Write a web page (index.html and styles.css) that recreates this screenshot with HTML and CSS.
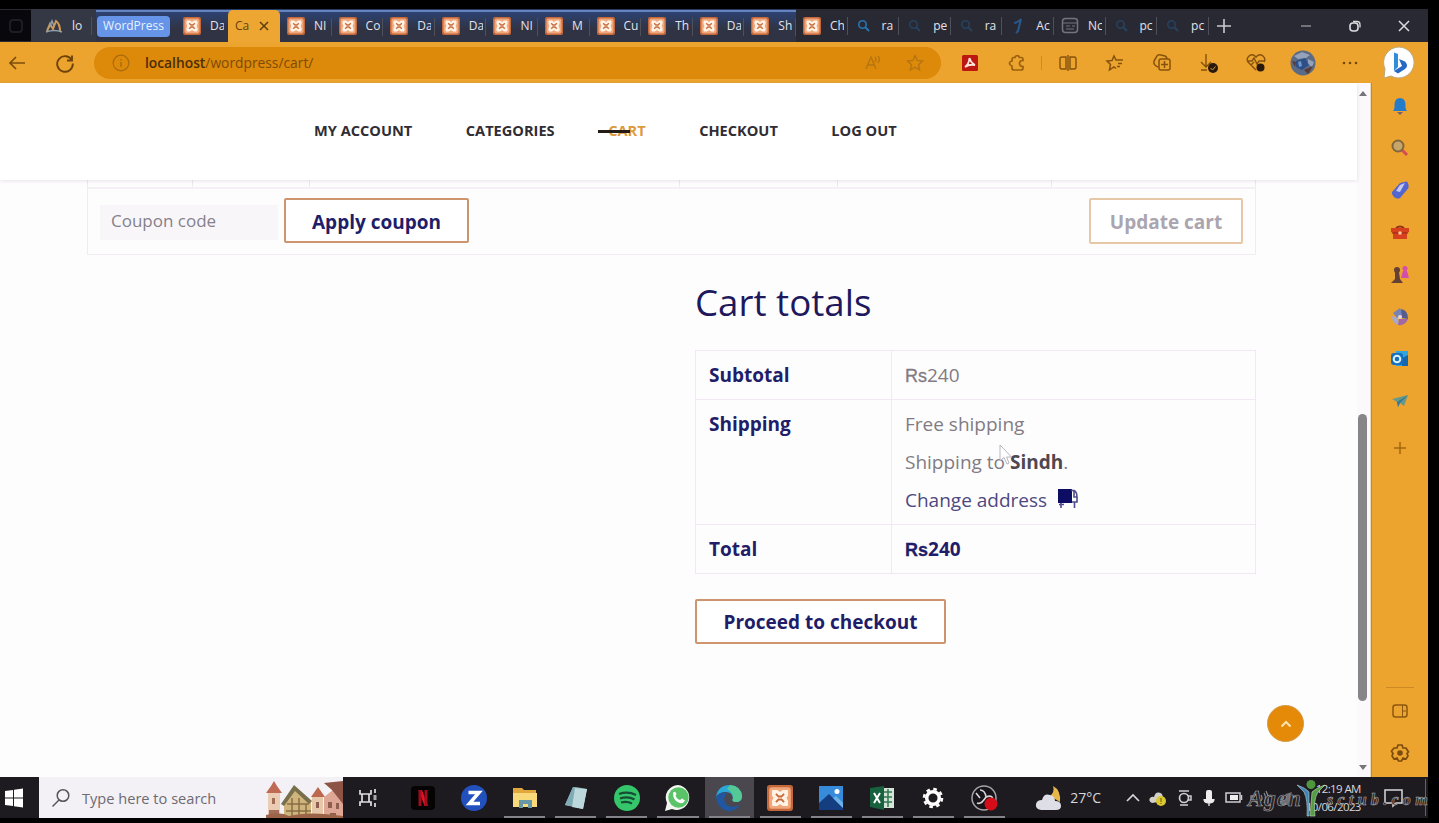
FILE: index.html
```html
<!DOCTYPE html>
<html lang="en">
<head>
    <meta charset="UTF-8">
    <meta name="viewport" content="width=device-width, initial-scale=1.0">
    <title>Cart</title>
    <link rel="stylesheet" href="styles.css">
</head>
<body>
    <!-- shared icons -->
    <svg class="sprite" width="0" height="0">
        <symbol id="xampp" viewBox="0 0 18 18">
            <rect width="18" height="18" rx="2" fill="#c4683c"/>
            <rect x="1.5" y="1.5" width="15" height="15" rx="2" fill="#f0a77c"/>
            <path d="M4 4H7L9 5.500L11 4H14V7L13 9L14 11V14H11L9 12.500L7 14H4V11L5 9L4 7Z" fill="#fff3e6" stroke="#fff3e6" stroke-linejoin="round"/>
            <path d="M6.200 6.200L8 8H10L11.800 6.200M6.200 11.800L8 10H10L11.800 11.800" fill="none" stroke="#c9693a" stroke-width="1.300"/>
        </symbol>
        <symbol id="lens" viewBox="0 0 18 18">
            <path d="M10.500 10.500L14 14" stroke="currentColor" stroke-width="2" fill="none"/>
            <circle cx="7.500" cy="7.500" r="3.700" stroke="currentColor" stroke-width="1.600" fill="none"/>
        </symbol>
    </svg>

    <div class="screen">
        <div class="tab-strip">
            <div class="workspace"><svg width="14" height="14" viewBox="0 0 14 14"><rect x="1" y="1" width="12" height="12" rx="3" fill="none" stroke="#1d1e25" stroke-width="2"/></svg></div>
            <div class="tab first">
                <svg class="favicon" viewBox="0 0 18 18"><path d="M2 14L5 7L8 12L11 4Q15 7 15 14" fill="none" stroke="#d39a55" stroke-width="2"/><path d="M1 15Q9 12 17 15M4 11L7 4L9 9" fill="none" stroke="#8fa3ae" stroke-width="1.500"/></svg>
                <span>lo</span>
            </div>
            <div class="tab-group">
                <div class="group-name">WordPress</div>
                <div class="tab before-active"><svg class="favicon"><use href="#xampp"/></svg><span>Da</span></div>
                <div class="tab active"><span>Ca</span><svg width="12" height="12" viewBox="0 0 12 12"><path d="M2 2L10 10M10 2L2 10" stroke="#5b3d0c" stroke-width="1.500"/></svg></div>
                <div class="tab"><svg class="favicon"><use href="#xampp"/></svg><span>NI</span></div>
                <div class="tab"><svg class="favicon"><use href="#xampp"/></svg><span>Co</span></div>
                <div class="tab"><svg class="favicon"><use href="#xampp"/></svg><span>Da</span></div>
                <div class="tab"><svg class="favicon"><use href="#xampp"/></svg><span>Da</span></div>
                <div class="tab"><svg class="favicon"><use href="#xampp"/></svg><span>NI</span></div>
                <div class="tab"><svg class="favicon"><use href="#xampp"/></svg><span>M</span></div>
                <div class="tab"><svg class="favicon"><use href="#xampp"/></svg><span>Cu</span></div>
                <div class="tab"><svg class="favicon"><use href="#xampp"/></svg><span>Th</span></div>
                <div class="tab"><svg class="favicon"><use href="#xampp"/></svg><span>Da</span></div>
                <div class="tab"><svg class="favicon"><use href="#xampp"/></svg><span>Sh</span></div>
            </div>
            <div class="tab"><svg class="favicon"><use href="#xampp"/></svg><span>Ch</span></div>
            <div class="tab"><svg class="favicon blue bright"><use href="#lens"/></svg><span>ra</span></div>
            <div class="tab"><svg class="favicon blue"><use href="#lens"/></svg><span>pe</span></div>
            <div class="tab"><svg class="favicon blue"><use href="#lens"/></svg><span>ra</span></div>
            <div class="tab"><svg class="favicon" viewBox="0 0 18 18"><path d="M5 6Q10 5 12 2L9 14L7 16" fill="none" stroke="#28598e" stroke-width="2"/></svg><span>Ac</span></div>
            <div class="tab"><svg class="favicon" viewBox="0 0 18 18"><rect x="1.500" y="1.500" width="15" height="14" rx="3" fill="none" stroke="#73747d" stroke-width="1.500"/><path d="M2 6h14M5 9h4M11 9h3M5 12h8" stroke="#73747d"/></svg><span>Nc</span></div>
            <div class="tab"><svg class="favicon blue"><use href="#lens"/></svg><span>pc</span></div>
            <div class="tab"><svg class="favicon blue"><use href="#lens"/></svg><span>pc</span></div>
            <svg class="new-tab" width="16" height="16" viewBox="0 0 16 16"><path d="M8 1v14M1 8h14" stroke="#c9c9cf" stroke-width="1.600"/></svg>
            <div class="window-buttons">
                <svg width="14" height="14" viewBox="0 0 14 14"><path d="M2 7h10" stroke="#8b8b92" stroke-width="1.500"/></svg>
                <svg width="14" height="14" viewBox="0 0 14 14"><rect x="2" y="4" width="8" height="8" rx="3" fill="none" stroke="#dcdce0" stroke-width="1.600"/><path d="M5 2.500h4q3 0 3 3v3" fill="none" stroke="#dcdce0" stroke-width="1.300"/></svg>
                <svg width="14" height="14" viewBox="0 0 14 14"><path d="M2 2L12 12M12 2L2 12" stroke="#dcdce0" stroke-width="1.500"/></svg>
            </div>
        </div>

        <div class="toolbar">
            <div class="nav-buttons">
                <svg width="20" height="18" viewBox="0 0 20 18"><path d="M8 3L2 9L8 15M2 9H17" fill="none" stroke="#7b4d0b" stroke-width="1.700"/></svg>
                <svg width="20" height="20" viewBox="0 0 20 20"><path d="M17 7.500A7.800 7.800 0 1 0 17.800 10.500M17 2.500V7.500H12" fill="none" stroke="#6d430a" stroke-width="1.900"/></svg>
            </div>
            <div class="address-bar">
                <svg width="18" height="18" viewBox="0 0 18 18"><circle cx="9" cy="9" r="7.800" fill="none" stroke="#a96c0c" stroke-width="1.200"/><path d="M9 8v5M9 5v1.500" stroke="#a96c0c" stroke-width="1.400"/></svg>
                <div class="url"><b>localhost</b>/wordpress/cart/</div>
                <svg width="18" height="16" viewBox="0 0 18 16"><path d="M2 14L7 2L12 14M4 10H10M11 2Q13 4 11 7M14 1Q17 4 14 8" fill="none" stroke="#b47511" stroke-width="1.300"/></svg>
                <svg class="star" width="18" height="18" viewBox="0 0 18 18"><path d="M9 1.500L11.200 6.500L16.500 7L12.500 10.700L13.700 16L9 13.200L4.300 16L5.500 10.700L1.500 7L6.800 6.500Z" fill="none" stroke="#b47511" stroke-width="1.300"/></svg>
            </div>
            <div class="tools">
                <div><svg width="18" height="18" viewBox="0 0 18 18"><rect x="1" y="1" width="16" height="16" rx="1.500" fill="#bc1711"/><path d="M4 13Q8 10 8.500 4Q10 9 14 11Q8 10 4 13" fill="none" stroke="#ffe4dc" stroke-width="1.800"/></svg></div>
                <div><svg width="18" height="18" viewBox="0 0 18 18"><path d="M15 5.500Q15 3.500 13 3.500H11.500Q10.500 1 8 2Q7 2.500 7 3.500H5.500Q4 3.500 4 6V7Q1.500 7.500 1.500 9.500Q1.500 11 4 12V14Q4 16 6 16H13Q15 16 15 14V12.500Q11.500 12.500 11.500 9.200Q11.500 6.500 15 6.500Z" fill="none" stroke="#9b610d" stroke-width="1.700"/></svg></div>
                <i class="divider"></i>
                <div><svg width="20" height="18" viewBox="0 0 20 18"><path d="M8 3H4Q2 3 2 5V13Q2 15 4 15H8ZM12 3H16Q18 3 18 5V13Q18 15 16 15H12ZM10 1V17" fill="none" stroke="#85520c" stroke-width="1.400"/></svg></div>
                <div><svg width="20" height="18" viewBox="0 0 20 18"><path d="M13 6L11 6L9 2L7 6.500L2 7L5.500 10.500L4.500 16L9 13L11 14.500M13 6H18M13 9.500H17M12 12.500H15" fill="none" stroke="#85520c" stroke-width="1.500"/></svg></div>
                <div><svg width="20" height="20" viewBox="0 0 20 20"><path d="M6 14Q1 12 2 8L5 3Q6 1 9 2L13 3Q15 4 15 6M7 8Q7 6 9 6H16Q18 6 18 8V15Q18 17 16 17H9Q7 17 7 15ZM12.500 8V15M9 11.500H16" fill="none" stroke="#85520c" stroke-width="1.500"/></svg></div>
                <div><svg width="20" height="20" viewBox="0 0 20 20"><path d="M7 1V14M2 9L7 14L12 9M2 17H8" fill="none" stroke="#85520c" stroke-width="1.400"/><circle cx="14" cy="15" r="5" fill="#29190d"/><path d="M11.500 15L13.500 17L16.500 13.500" fill="none" stroke="#d89a42"/></svg></div>
                <div><svg width="20" height="20" viewBox="0 0 20 20"><path d="M10 17L2 9Q0 6 3 3Q7 0 10 4Q13 0 17 3Q20 6 18 9M2 8H6L8 5L11 11L13 8H18M5 12L8 9" fill="none" stroke="#85520c" stroke-width="1.400"/><circle cx="14.500" cy="14.500" r="4" fill="#29190d"/></svg></div>
                <div><svg width="26" height="26" viewBox="0 0 26 26"><circle cx="13" cy="13" r="12.500" fill="#5b6a85"/><path d="M4 6L12 2L20 5L16 8L8 9ZM18 9L24 12L22 17L18 14Z" fill="#95a2b9"/><path d="M6 11L15 8L19 15L12 20L6 17Z" fill="#2c4f8a"/><path d="M8 12L11 11L12 16L9 17Z" fill="#7393c4"/><path d="M14 20L23 16L18 24ZM2 11L6 12L5 17Z" fill="#5b3834"/></svg></div>
                <div><svg width="18" height="6" viewBox="0 0 18 6"><circle cx="3" cy="3" r="1.300" fill="#764909"/><circle cx="9" cy="3" r="1.300" fill="#764909"/><circle cx="15" cy="3" r="1.300" fill="#764909"/></svg></div>
            </div>
            <svg class="bing" width="34" height="34" viewBox="0 0 34 34"><path d="M17 1A15.500 15.500 0 1 1 9 30L2 32L3 23A15.500 15.500 0 0 1 17 1Z" fill="#fff" stroke="#bda779"/><path d="M12 6.500L16 8V21L12 25Z" fill="#2f8ddb"/><path d="M12 25L20 20L17 13L23 15.500Q27 20 23 23L16 27.500Z" fill="#2668c4"/></svg>
        </div>

        <div class="browser-body">
            <div class="page">
                <div class="site-header">
                    <div class="menu">
                        <a>MY ACCOUNT</a>
                        <a>CATEGORIES</a>
                        <a class="current">CART</a>
                        <a>CHECKOUT</a>
                        <a>LOG OUT</a>
                    </div>
                </div>
                <div class="content">
                    <div class="item-row"><i></i><i></i><i></i><i></i><i></i><i></i></div>
                    <div class="coupon-row">
                        <div class="coupon-input">Coupon code</div>
                        <div class="button apply">Apply coupon</div>
                        <div class="button update">Update cart</div>
                    </div>
                    <div class="totals">
                        <h2>Cart totals</h2>
                        <table>
                            <tr><th>Subtotal</th><td><span class="currency">Rs</span>240</td></tr>
                            <tr><th>Shipping</th><td>
                                <p>Free shipping</p>
                                <p>Shipping to <strong>Sindh</strong>.</p>
                                <p class="change">Change address <svg width="22" height="22" viewBox="0 0 22 22"><rect x="1" y="1" width="14" height="14" fill="#0d0d63"/><path d="M14 2.500H17Q20 4 20 9V14H15M17 3V9H20M4 15V20M17.500 14V20M2 16.500H7" fill="none" stroke="#4c4c8e" stroke-width="1.600"/></svg></p>
                            </td></tr>
                            <tr class="total"><th>Total</th><td><span class="currency">Rs</span>240</td></tr>
                        </table>
                        <div class="button checkout">Proceed to checkout</div>
                    </div>
                </div>
                <div class="to-top"><svg width="12" height="8" viewBox="0 0 12 8"><path d="M1.500 6.500L6 2L10.500 6.500" fill="none" stroke="#ffe3b0" stroke-width="2"/></svg></div>
                <svg class="cursor" width="14" height="22" viewBox="0 0 14 22"><path d="M1 1V17L5 13.500L8 20L10 19L7.500 13H12.500Z" fill="#fff" fill-opacity=".6" stroke="#b9b3bf"/></svg>
            </div>
            <div class="scrollbar">
                <i class="arrow-up"></i>
                <i class="thumb"></i>
                <i class="arrow-down"></i>
            </div>
            <div class="sidebar">
                <div><svg width="18" height="20" viewBox="0 0 18 20"><path d="M2 15Q4 13 3.500 8Q4 2 9 2Q14 2 14.500 8Q14 13 16 15Z" fill="#237bc9"/><path d="M6 16H12L9 19Z" fill="#765d70"/></svg></div>
                <div><svg width="20" height="20" viewBox="0 0 20 20"><path d="M12 12L17 17" stroke="#d64a55" stroke-width="3"/><circle cx="8" cy="8" r="5.500" fill="#c7a66a" stroke="#83663c" stroke-width="2"/></svg></div>
                <div><svg width="20" height="20" viewBox="0 0 20 20"><path d="M2 12L10 3L16 1.500Q19 2 18.500 8L10 18Q5 20 2 14Z" fill="#5265d1"/><path d="M10 5L15 3L10 12L6 11Z" fill="#c7c8ee"/></svg></div>
                <div><svg width="20" height="16" viewBox="0 0 20 16"><path d="M6 3Q10 0 14 3" fill="none" stroke="#93311b" stroke-width="2"/><path d="M1 3H19V7L17 8V14H3V8L1 7Z" fill="#d7401c"/><path d="M2 8H18" stroke="#962710"/><circle cx="10" cy="8" r="1.800" fill="#ffc4a0"/></svg></div>
                <div><svg width="20" height="20" viewBox="0 0 20 20"><circle cx="7" cy="5" r="3" fill="#654034"/><path d="M5 7H9L10 14L13 18H1L5 14Z" fill="#654034"/><circle cx="15" cy="3.500" r="2.500" fill="#d24eac"/><path d="M13 6H17L19 13H11Z" fill="#d24eac"/></svg></div>
                <div><svg width="20" height="20" viewBox="0 0 20 20"><path d="M3 6L10 1L13 7L7 11Z" fill="#7883b5"/><path d="M11 2Q18 3 18 12L12 11Z" fill="#565d8c"/><path d="M2 9L8 11L9 18Q2 17 2 9Z" fill="#a4aace"/><path d="M9 12L18 12Q15 19 8 18Z" fill="#a268a5"/><circle cx="10" cy="10" r="2" fill="#e3d4e0"/></svg></div>
                <div><svg width="20" height="20" viewBox="0 0 20 20"><path d="M6 2H18V17H6Z" fill="#30a4df"/><path d="M12 9L18 6V17H12Z" fill="#1267b3"/><rect x="1" y="4" width="12" height="12" rx="3" fill="#176ebb"/><circle cx="7" cy="10" r="3.300" fill="none" stroke="#d9f4ff" stroke-width="2"/></svg></div>
                <div><svg width="18" height="16" viewBox="0 0 18 16"><path d="M1 6L17 2L13 13L9 10L7 14L6 9Z" fill="#66998a"/><path d="M6 9L17 2L9 10L7 14Z" fill="#3a7795"/></svg></div>
                <div class="add"><svg width="14" height="14" viewBox="0 0 14 14"><path d="M7 1V13M1 7H13" stroke="#a1670f" stroke-width="1.500"/></svg></div>
                <i class="divider"></i>
                <div><svg width="18" height="16" viewBox="0 0 18 16"><rect x="2" y="2" width="14" height="12" rx="2.500" fill="none" stroke="#8c570e" stroke-width="1.500"/><path d="M11.500 2V14M11.500 8H15" stroke="#8c570e"/></svg></div>
                <div><svg width="20" height="20" viewBox="0 0 20 20"><path d="M8 2H12L13 5L16 5L18.500 9L17 10.500L18 13L16 16L13 15L11.500 18H8.500L7 15L4 16L2 13L3 10.500L1.500 8L4 5L7 5Z" fill="none" stroke="#7c4c0d" stroke-width="1.700"/><circle cx="10" cy="10" r="2.800" fill="#7c4c0d"/></svg></div>
            </div>
        </div>

        <div class="taskbar">
            <div class="start"><svg width="18" height="20" viewBox="0 0 18 20"><path d="M0 3L8 2V9.500H0ZM9 1.800L18 .5V9.500H9ZM0 10.500H8V18L0 17ZM9 10.500H18V19.500L9 18.200Z" fill="#fff"/></svg></div>
            <div class="search">
                <svg width="20" height="20" viewBox="0 0 20 20"><circle cx="12" cy="7.500" r="5.800" fill="none" stroke="#56545b" stroke-width="1.500"/><path d="M8 12L1.500 18.500" stroke="#56545b" stroke-width="1.500"/></svg>
                <span>Type here to search</span>
                <svg class="village" width="77" height="38" viewBox="0 0 77 38">
                    <path d="M2 13H14V38H2Z" fill="#ebcdb5"/><path d="M0 13L5 6L8 1L11 6L16 13Z" fill="#bf6a52"/>
                    <path d="M6 18H9V24H6ZM3 30H13V38H3Z" fill="#a36e58"/>
                    <path d="M18 22L30 8L45 22V38H18Z" fill="#cfb47c"/><path d="M15 24L28 5L46 21L43 24L29 11L18 26Z" fill="#78704c"/>
                    <path d="M21 24H43M20 31H45M26 18V38M33 18V38M40 24V38" stroke="#8b6c45" stroke-width="1.500"/>
                    <path d="M46 17H57V38H46Z" fill="#e7c7a9"/><path d="M45 17L52 7L59 17Z" fill="#bc674f"/>
                    <path d="M58 17L67 10L77 20V38H58Z" fill="#dea795"/><path d="M58 3L77 1V24L66 10Z" fill="#8d5445"/>
                    <path d="M50 22H53V28H50ZM62 22H66V28H62ZM70 23H73V29H70ZM64 33H70V38H64Z" fill="#8e5f50"/>
                    <path d="M0 35Q14 31 23 36Q43 31 77 36V38H0Z" fill="#9b6449"/>
                </svg>
            </div>
            <div class="apps">
                <div class="task-view"><svg width="20" height="20" viewBox="0 0 20 20"><path d="M2 2V6H13V2M2 18V14H13V18M4 6V14M11 6V14M17 1V5M17 15V19" fill="none" stroke="#dedde0" stroke-width="1.700"/><rect x="15.500" y="7" width="3" height="5" fill="#aaa9ad"/></svg></div>
                <div><svg width="26" height="26" viewBox="0 0 26 26"><rect x="1" y="1" width="24" height="24" rx="4" fill="#050304"/><path d="M8.500 5H12L18 21H14.500Z" fill="#e31226"/><path d="M8.500 5H11.500V21H8.500ZM14.500 5H17.500V21H14.500Z" fill="#9f0c1c"/></svg></div>
                <div><svg width="28" height="28" viewBox="0 0 28 28"><circle cx="14" cy="14" r="13" fill="#2251bd"/><path d="M8.500 8.500H19L9.500 19.500H20" fill="none" stroke="#fff" stroke-width="3.500"/></svg></div>
                <div class="open"><svg width="26" height="24" viewBox="0 0 26 24"><path d="M1 2H10L12 4H24V20H1Z" fill="#e2a83e"/><path d="M1 7H25V21H1Z" fill="#f8da7b"/><path d="M7 22V14H20V22H16V18H11V22Z" fill="#6898a6"/></svg></div>
                <div class="open"><svg width="26" height="26" viewBox="0 0 26 26"><path d="M10 2L24 4L20 24L2 20Z" fill="#a8c8ce"/><path d="M10 2L2 20L14 22L19 3Z" fill="#7fabb5"/><path d="M12 3L24 4L20 24L9 22Z" fill="#bdd8dc"/></svg></div>
                <div class="open"><svg width="28" height="28" viewBox="0 0 28 28"><circle cx="14" cy="14" r="13" fill="#35c56b"/><path d="M6 10Q15 7 23 11M7 14.500Q15 12 21.500 15.500M8 18.500Q14 17 19 19.500" fill="none" stroke="#174d34" stroke-width="2.300"/></svg></div>
                <div class="open"><svg width="28" height="28" viewBox="0 0 28 28"><path d="M14 1A12.500 12.500 0 1 1 8 25L1 27L3 19A12.500 12.500 0 0 1 14 1Z" fill="#f2f6f1"/><circle cx="14.500" cy="13.500" r="10.200" fill="#5ac267"/><path d="M9 9Q11 6 12.500 10L11.500 12Q13 15 16 16L18 14.500L21 16.500Q19 20 16 19Q9 17 9 9" fill="#fff"/></svg></div>
                <div class="open edge"><svg width="28" height="28" viewBox="0 0 28 28"><path d="M1 13Q3 1 15 1Q26 2 27 12Q27 18 21 18Q16 18 18 14Q17 8 11 8Q4 8 1 13Z" fill="#2aa6d7"/><path d="M15 1Q26 2 27 12Q27 18 21 18Q16 18 18 14Q18 8 12 5Z" fill="#55c995"/><path d="M1 13Q5 7 12 9Q7 15 11 20Q16 25 25 21Q20 28 12 27Q2 24 1 13Z" fill="#2157a0"/></svg></div>
                <div class="open"><svg width="26" height="26"><use href="#xampp"/></svg></div>
                <div class="open"><svg width="26" height="26" viewBox="0 0 26 26"><rect x="1" y="1" width="24" height="24" fill="#378bdb"/><path d="M1 18L11 9L25 23V25H1Z" fill="#153e80"/><path d="M15 13L18 11L25 18V23Z" fill="#6eb2e8"/><circle cx="19" cy="6.500" r="2.500" fill="#fff"/></svg></div>
                <div class="open"><svg width="26" height="26" viewBox="0 0 26 26"><rect x="12" y="3" width="13" height="20" fill="#d4e5d7"/><path d="M15 7H23M15 12H23M15 17H23M19 4V22" stroke="#317650" stroke-width="1.500"/><path d="M1 3L15 1V25L1 22Z" fill="#17613e"/><path d="M5 8L11 18M11 8L5 18" stroke="#fff" stroke-width="2"/></svg></div>
                <div class="open"><svg width="24" height="24" viewBox="0 0 24 24"><circle cx="12" cy="12" r="6.300" fill="none" stroke="#fff" stroke-width="3.500"/><circle cx="12" cy="12" r="9" fill="none" stroke="#fff" stroke-width="2.500" stroke-dasharray="3.570 3.500"/></svg></div>
                <div class="open"><svg width="28" height="28" viewBox="0 0 28 28"><circle cx="13" cy="14" r="12" fill="#171519" stroke="#a5a4a8" stroke-width="1.500"/><path d="M9 6Q14 6 15 13M6 19Q10 21 15 13M15 13Q22 10 22 17M5 9L9 14" fill="none" stroke="#d6d5d8" stroke-width="1.600"/><circle cx="20" cy="20" r="6.500" fill="#d40d19"/></svg></div>
            </div>
            <div class="weather">
                <svg width="28" height="28" viewBox="0 0 28 28"><path d="M18 2Q26 6 25 18L15 12Q20 8 18 2Z" fill="#e8b74b"/><path d="M6 26Q0 25 1 20Q2 16 7 16Q9 9 15 11Q20 12 20 17Q26 17 26 22Q26 26 21 26Z" fill="#dddee6"/></svg>
                <span>27°C</span>
            </div>
            <div class="tray">
                <div><svg width="14" height="10" viewBox="0 0 14 10"><path d="M1 8L7 2L13 8" fill="none" stroke="#d8d7db" stroke-width="1.600"/></svg></div>
                <div><svg width="20" height="18" viewBox="0 0 20 18"><path d="M4 14Q0 12 2 9Q4 7 6 8Q8 1 14 5L16 12Z" fill="#d2d0c7"/><circle cx="13" cy="12" r="5" fill="#dbc72e"/><path d="M13 9V13M13 14V15" stroke="#635b13"/></svg></div>
                <div><svg width="16" height="18" viewBox="0 0 16 18"><circle cx="8" cy="9" r="4.500" fill="none" stroke="#cfced3" stroke-width="1.700"/><path d="M3 2H13M4 16H12M12 7H15V11H12" fill="none" stroke="#cfced3" stroke-width="1.500"/></svg></div>
                <div><svg width="14" height="18" viewBox="0 0 14 18"><rect x="4" y="1" width="6" height="12" rx="2" fill="#eee"/><path d="M2 10Q2 14 7 14Q12 14 12 10M7 14V17" fill="#eee" stroke="#eee" stroke-width="1.300"/></svg></div>
                <div><svg width="18" height="12" viewBox="0 0 18 12"><rect x="1" y="1" width="14" height="9" fill="none" stroke="#cfced3" stroke-width="1.500"/><rect x="5" y="3" width="8" height="5" fill="#eee"/><path d="M16.500 3V8" stroke="#cfced3" stroke-width="1.500"/></svg></div>
                <div><svg width="20" height="18" viewBox="0 0 20 18"><path d="M1 7H4L8 3V15L4 11H1ZM11 6Q13 9 11 12M14 4Q17 9 14 14M16 2Q20 9 17 16" fill="none" stroke="#8a898d" stroke-width="1.300"/></svg></div>
                <div><svg width="18" height="18" viewBox="0 0 18 18"><path d="M2 15Q5 5 16 3L12 16Z" fill="#706f74"/></svg></div>
            </div>
            <div class="clock"><span>12:19 AM</span><span>10/06/2023</span></div>
            <svg class="notifications" width="22" height="20" viewBox="0 0 22 20"><path d="M2 2H19V15H13L10 18V15H2Z" fill="none" stroke="#d8d7db" stroke-width="1.500"/></svg>
            <i class="show-desktop"></i>
            <div class="watermark">
                <span class="word">Agen</span>
                <svg width="30" height="37" viewBox="0 0 30 37"><circle cx="15" cy="4.500" r="4.500" fill="#4e973c"/><path d="M1 5Q10 8 13 12V36H11Q12 20 8 12Z" fill="#4385ae" stroke="#b5cdda" stroke-width=".6"/><path d="M29 5Q20 8 16 12L14 36H19Q17 20 22 12Z" fill="#569c48" stroke="#bfddae" stroke-width=".6"/></svg>
                <span class="domain">sctub.com</span>
            </div>
        </div>
    </div>
</body>
</html>
```
FILE: styles.css
```css
* {
    box-sizing: border-box;
}
body {
    margin: 0;
    height: 823px;
    padding-top: 9px;
    background: #000;
    overflow: hidden;
    font-family: "Open Sans", "Noto Sans", sans-serif;
}
svg {
    display: block;
    flex-shrink: 0;
}
.sprite {
    position: absolute;
}
.screen {
    width: 1428px;
    height: 809px;
    display: flex;
    flex-direction: column;
}

/* tabs */
.tab-strip {
    height: 33px;
    display: flex;
    align-items: center;
    background: #292933;
    flex-shrink: 0;
}
.workspace {
    width: 31px;
    height: 31px;
    background: #08080c;
    display: flex;
    align-items: center;
    justify-content: center;
}
.tab {
    width: 51.6px;
    height: 33px;
    flex-shrink: 0;
    display: flex;
    align-items: center;
    padding-left: 7px;
    position: relative;
}
.tab::after {
    content: "";
    position: absolute;
    right: 0;
    top: 8px;
    height: 18px;
    border-right: 1px solid #50505b;
}
.tab span {
    margin-left: 9px;
    width: 14px;
    height: 18px;
    overflow: hidden;
    white-space: nowrap;
    font-size: 12px;
    line-height: 17px;
    color: #e3e3ea;
}
.favicon {
    width: 18px;
    height: 18px;
}
.blue {
    color: #26435f;
}
.bright {
    color: #2576b4;
}
.tab.first {
    width: 65px;
    padding-left: 14px;
    background: #343744;
}
.tab.first::after {
    right: 4px;
}
.tab-group {
    display: flex;
    align-items: center;
    height: 33px;
    background: linear-gradient(#2c4478, #303343 60%);
    border-top: 1px solid #263c66;
    box-shadow: inset 0 2px #6583bd;
}
.group-name {
    width: 73px;
    height: 21px;
    margin-left: 1px;
    border-radius: 4px;
    background: #6594e9;
    color: #e8f3ff;
    font-size: 12px;
    line-height: 20px;
    text-align: center;
}
.tab.before-active {
    width: 58px;
    padding-left: 13px;
}
.before-active::after, .active::after {
    display: none;
}
.tab.active {
    width: 52px;
    padding-left: 7px;
    background: #eda632;
    border-radius: 5px 5px 0 0;
}
.tab.active span {
    margin: 0 8px 0 0;
    color: #66420b;
    width: 15px;
}
.new-tab {
    margin-left: 7px;
}
.window-buttons {
    margin-left: auto;
    margin-right: 17px;
    display: flex;
    gap: 35px;
}

/* toolbar */
.toolbar {
    height: 41px;
    display: flex;
    align-items: center;
    background: #eca42f;
    flex-shrink: 0;
}
.nav-buttons {
    width: 94px;
    padding-left: 8px;
    display: flex;
    align-items: center;
    gap: 27px;
}
.address-bar {
    width: 847px;
    height: 32px;
    padding: 0 17px 0 18px;
    border-radius: 16px;
    background: #dd890a;
    display: flex;
    align-items: center;
}
.url {
    margin-left: 15px;
    flex: 1;
    font-size: 13.8px;
    color: #7c4b07;
}
.url b {
    font-weight: 600;
    color: #4b2d05;
}
.star {
    margin-left: 24px;
}
.tools {
    margin-left: 6px;
    display: flex;
    align-items: center;
}
.tools div {
    width: 46.9px;
    display: flex;
    justify-content: center;
}
.tools .divider {
    width: 4px;
    height: 14px;
    border-left: 1px solid #cd8c23;
}
.bing {
    margin-left: 9px;
}

/* page */
.browser-body {
    flex: 1;
    display: flex;
    background: #eca42f;
}
.page {
    width: 1357px;
    height: 694px;
    background: #fefdfe;
    position: relative;
}
.site-header {
    height: 97px;
    background: #fff;
    box-shadow: 0 1px 4px rgba(80, 50, 90, 0.13);
    position: relative;
}
.menu {
    display: flex;
    gap: 53.5px;
    padding: 37px 0 0 314px;
    font-size: 14.6px;
    font-weight: 700;
    line-height: 20px;
    color: #302d34;
}
.menu .current {
    color: #dc9a3d;
    position: relative;
}
.current::before {
    content: "";
    position: absolute;
    left: -10px;
    top: 10px;
    width: 32px;
    height: 3px;
    background: #241b15;
}
.content {
    margin-left: 87px;
    width: 1169px;
}
.item-row {
    height: 9px;
    display: grid;
    grid-template-columns: 105px 117px 370px 158px 214px 204px;
    border-left: 1px solid #f1e8f3;
    border-bottom: 2px solid #f5eff6;
}
.item-row i {
    border-right: 1px solid #f1e8f3;
}
.coupon-row {
    height: 66px;
    display: flex;
    align-items: flex-start;
    padding: 9px 12px 0;
    border: 1px solid #f4eaf5;
    border-top: none;
}
.coupon-input {
    width: 178px;
    height: 35px;
    margin-top: 7px;
    padding-left: 11px;
    background: #f9f6fa;
    color: #85818a;
    font-size: 17px;
    line-height: 32px;
}
.button {
    height: 45px;
    border: 2px solid #ce946d;
    border-radius: 2px;
    background: #fff;
    color: #211d68;
    font-size: 19px;
    font-weight: 700;
    line-height: 43px;
    text-align: center;
}
.apply {
    width: 185px;
    margin-left: 6px;
    line-height: 44px;
}
.update {
    width: 154px;
    height: 46px;
    margin-left: auto;
    border-color: #e6c8a7;
    color: #aaa5ae;
    line-height: 45px;
}
.totals {
    margin-left: 608px;
    width: 561px;
}
h2 {
    margin: 22px 0 23px;
    font-size: 36.7px;
    line-height: 50px;
    font-weight: 400;
    color: #1d195c;
}
table {
    width: 561px;
    border-collapse: collapse;
    table-layout: fixed;
    font-size: 19px;
    line-height: 38px;
}
th, td {
    border: 1px solid #f3e6f5;
    text-align: left;
    vertical-align: top;
    padding: 5px 13px;
}
th {
    width: 196px;
    color: #211d68;
}
td {
    color: #817b83;
}
p {
    margin: 0;
    height: 38px;
}
strong {
    color: #4e4852;
}
.total td {
    color: #211d68;
    font-weight: 700;
}
.currency {
    font-family: "Liberation Sans", sans-serif;
    font-size: 18px;
    line-height: 30px;
    -webkit-text-stroke: 0.3px;
}
.change {
    display: flex;
    align-items: center;
    gap: 10px;
    color: #4d4880;
}
.change svg {
    margin-top: -2px;
}
.checkout {
    width: 251px;
    margin-top: 25px;
}
.to-top {
    position: absolute;
    left: 1267px;
    top: 622px;
    width: 37px;
    height: 37px;
    border-radius: 50%;
    background: #e58a08;
    border: 1px solid #d29b4d;
    display: flex;
    align-items: center;
    justify-content: center;
}
.cursor {
    position: absolute;
    left: 999px;
    top: 361px;
}
.scrollbar {
    width: 14px;
    padding-right: 2px;
    background: #fbf9fc;
    border-right: 1px solid #e9dcc3;
    display: flex;
    flex-direction: column;
    align-items: center;
}
.scrollbar i {
    flex-shrink: 0;
}
.arrow-up {
    margin-top: 8px;
    border: 4px solid transparent;
    border-top: none;
    border-bottom: 5px solid #77747b;
}
.thumb {
    width: 9px;
    height: 287px;
    margin-top: 318px;
    border-radius: 5px;
    background: #88858a;
}
.arrow-down {
    margin-top: 64px;
    border: 4px solid transparent;
    border-bottom: none;
    border-top: 5px solid #77747b;
}
.sidebar {
    width: 57px;
    padding: 2px 0 3px;
    display: flex;
    flex-direction: column;
    align-items: center;
    border-left: 1px solid #c58b34;
}
.sidebar div {
    height: 42.2px;
    display: flex;
    align-items: center;
}
.sidebar .add {
    height: 50px;
}
.sidebar .divider {
    width: 28px;
    margin: auto 0 2px;
    border-top: 1px solid #cc8b22;
}

/* taskbar */
.taskbar {
    height: 41px;
    display: flex;
    align-items: center;
    background: #1d1b20;
    position: relative;
    flex-shrink: 0;
}
.start {
    width: 39px;
    padding-left: 5px;
}
.search {
    width: 304px;
    height: 41px;
    padding-left: 12px;
    background: #f3f1f5;
    display: flex;
    align-items: center;
}
.search span {
    margin-left: 11px;
    font-size: 14.6px;
    color: #6d6a72;
}
.village {
    margin-left: auto;
    margin-top: 3px;
}
.apps {
    display: flex;
    height: 41px;
}
.apps div {
    width: 51.1px;
    display: flex;
    align-items: center;
    justify-content: center;
    position: relative;
}
.apps .task-view {
    width: 54px;
    padding-right: 4px;
}
.apps .open::after {
    content: "";
    position: absolute;
    left: 5px;
    right: 5px;
    bottom: 0;
    height: 2px;
    background: #858489;
}
.apps .edge {
    background: linear-gradient(90deg, transparent 1px, #4a484e 1px, #4a484e 50px, transparent 50px);
}
.weather {
    margin-left: 25px;
    width: 85px;
    display: flex;
    align-items: center;
    gap: 7px;
    color: #d8d7db;
    font-size: 14px;
}
.tray {
    display: flex;
    align-items: center;
}
.tray div {
    width: 25.4px;
    display: flex;
    justify-content: center;
}
.clock {
    width: 62px;
    margin-left: 1px;
    display: flex;
    flex-direction: column;
    align-items: flex-end;
    color: #d8d7db;
    font-size: 11.5px;
    line-height: 18px;
    letter-spacing: -0.6px;
}
.notifications {
    margin-left: 22px;
}
.show-desktop {
    height: 37px;
    margin-left: 20px;
    border-left: 1px solid #66646a;
}
.watermark {
    position: absolute;
    left: 1248px;
    top: 3px;
    display: flex;
    align-items: center;
    font-family: "Liberation Serif", serif;
    font-style: italic;
    font-weight: 700;
    color: #27262a;
    -webkit-text-stroke: 0.6px #aaa9ad;
}
.word {
    width: 48px;
    font-size: 23px;
    letter-spacing: 1px;
}
.domain {
    margin-left: 1px;
    margin-top: 3px;
    font-size: 16px;
    letter-spacing: 4.3px;
}
```
